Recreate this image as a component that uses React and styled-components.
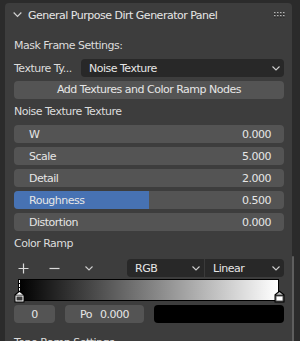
import styled, { createGlobalStyle } from 'styled-components';

const GlobalStyle = createGlobalStyle`
    html, body {
        margin: 0;
        padding: 0;
        background: #2b2b2b;
    }
    body {
        font-family: "DejaVu Sans", "Liberation Sans", sans-serif;
        font-size: 11px;
        letter-spacing: -0.5px;
        color: #e0e0e0;
    }
`;

const Region = styled.div`
    position: relative;
    width: 300px;
    height: 341px;
    padding: 3px 8px 0 5px;
    box-sizing: border-box;
    overflow: hidden;
`;

const Scrollbar = styled.div`
    position: absolute;
    right: 6px;
    top: 256px;
    width: 2px;
    height: 100px;
    border-radius: 1px;
    background: #5e5e5e;
`;

const Panel = styled.section`
    background: #3d3d3d;
    border-radius: 4px 4px 0 0;
    min-height: 360px;
`;

const PanelHeader = styled.header`
    display: flex;
    align-items: center;
    height: 24px;
    padding: 0 7px 0 8px;
    color: #e6e6e6;
    & .title {
        flex: 1;
        margin-left: 6px;
        white-space: nowrap;
    }
`;

const PanelBody = styled.div`
    display: flex;
    flex-direction: column;
    gap: 4px;
    padding: 10px 8px 0 9px;
`;

const Label = styled.div`
    height: 18px;
    line-height: 18px;
    color: #dcdcdc;
    white-space: nowrap;
    margin-top: ${p => p.$top || 0}px;
`;

const PropRow = styled.div`
    display: flex;
    align-items: center;
    height: 18px;
    & .prop-label {
        width: 67px;
        color: #dcdcdc;
        white-space: nowrap;
    }
`;

const Dropdown = styled.div`
    display: flex;
    align-items: center;
    justify-content: space-between;
    flex: ${p => (p.$width ? 'none' : 1)};
    width: ${p => (p.$width ? p.$width + 'px' : 'auto')};
    height: 18px;
    padding: 0 4px 0 8px;
    box-sizing: border-box;
    background: #282828;
    color: #e6e6e6;
    border-radius: ${p => p.$radius || '4px'};
    border-left: ${p => (p.$joined ? '1px solid #3a3a3a' : 'none')};
    white-space: nowrap;
`;

const Button = styled.div`
    height: 18px;
    line-height: 18px;
    text-align: center;
    background: #545454;
    color: #e6e6e6;
    border-radius: 4px;
    white-space: nowrap;
`;

const Slider = styled.div`
    position: relative;
    height: 18px;
    background: #545454;
    border-radius: 4px;
    overflow: hidden;
    & .fill {
        position: absolute;
        left: 0;
        top: 0;
        bottom: 0;
        background: #4772b3;
    }
    & .content {
        position: relative;
        display: flex;
        justify-content: space-between;
        align-items: center;
        height: 100%;
        padding: 0 13px 0 15px;
        color: #e6e6e6;
    }
`;

const Toolbar = styled.div`
    display: flex;
    align-items: center;
    height: 18px;
    margin-top: 2px;
`;

const IconSlot = styled.div`
    display: flex;
    align-items: center;
    justify-content: center;
    width: ${p => p.$w}px;
    height: 18px;
    color: #d8d8d8;
`;

const Spacer = styled.div`
    flex: 1;
`;

const Ramp = styled.div`
    position: relative;
    height: 22px;
    margin: -2px 5px 0 4px;
    & .gradient {
        height: 20px;
        border: 1px solid #000;
        background: linear-gradient(to right, #000, #fff);
    }
    & .dash {
        position: absolute;
        left: 1px;
        top: 1px;
        height: 11px;
        border-left: 1px dashed #fff;
    }
`;

const Marker = styled.svg`
    position: absolute;
    bottom: -2px;
    left: ${p => p.$x}px;
`;

const ValueRow = styled.div`
    display: flex;
    gap: 10px;
    height: 18px;
`;

const Field = styled.div`
    display: flex;
    align-items: center;
    justify-content: center;
    gap: 8px;
    width: ${p => p.$w}px;
    background: #545454;
    color: #e6e6e6;
    border-radius: 4px;
`;

const Swatch = styled.div`
    flex: 1;
    background: #000;
    border-radius: 4px;
`;

function Chevron({ color = '#cfcfcf', size = 8 }) {
    return (
        <svg width={size} height={size / 2 + 1} viewBox="0 0 8 5">
            <polyline points="0.5,0.5 4,4 7.5,0.5" fill="none" stroke={color} strokeWidth="1.1" />
        </svg>
    );
}

function Grip() {
    const dots = [];
    for (let r = 0; r < 2; r++) {
        for (let c = 0; c < 4; c++) {
            dots.push(<rect key={`d${r}${c}`} x={c * 3} y={r * 3} width="1.5" height="1.5" fill="#b5b5b5" />);
            dots.push(<rect key={`s${r}${c}`} x={c * 3} y={r * 3 + 1.5} width="1.5" height="1" fill="#1e1e1e" />);
        }
    }
    return <svg width="11" height="6" viewBox="0 0 11 6">{dots}</svg>;
}

function RampMarker({ x, color, active }) {
    return (
        <Marker $x={x} width="11" height="13" viewBox="0 0 11 13">
            <path d="M5.5 0.5 L10.5 4.5 L10.5 12.5 L0.5 12.5 L0.5 4.5 Z" fill="#000" />
            <path d="M5.5 2 L9 4.8 L2 4.8 Z" fill={active ? '#ffffff' : '#bdbdbd'} />
            <rect x="1.5" y="5.5" width="8" height="6" fill={active ? '#ffffff' : '#5a5a5a'} />
            <rect x="2.5" y="6.5" width="6" height="4" fill={color} />
        </Marker>
    );
}

const sliders = [
    { name: 'W', value: '0.000' },
    { name: 'Scale', value: '5.000' },
    { name: 'Detail', value: '2.000' },
    { name: 'Roughness', value: '0.500', fill: 50 },
    { name: 'Distortion', value: '0.000' },
];

function App() {
    return (
        <Region>
            <GlobalStyle />
            <Panel>
                <PanelHeader>
                    <Chevron size={9} color="#d0d0d0" />
                    <span className="title">General Purpose Dirt Generator Panel</span>
                    <Grip />
                </PanelHeader>
                <PanelBody>
                    <Label>Mask Frame Settings:</Label>
                    <PropRow>
                        <span className="prop-label">Texture Ty...</span>
                        <Dropdown>
                            <span>Noise Texture</span>
                            <Chevron />
                        </Dropdown>
                    </PropRow>
                    <Button>Add Textures and Color Ramp Nodes</Button>
                    <Label>Noise Texture Texture</Label>
                    {sliders.map(s => (
                        <Slider key={s.name}>
                            {s.fill && <div className="fill" style={{ width: `${s.fill}%` }} />}
                            <div className="content">
                                <span>{s.name}</span>
                                <span>{s.value}</span>
                            </div>
                        </Slider>
                    ))}
                    <Label>Color Ramp</Label>
                    <Toolbar>
                        <IconSlot $w={18}>
                            <svg width="11" height="11" viewBox="0 0 11 11">
                                <path d="M5.5 0.5 V10.5 M0.5 5.5 H10.5" stroke="#dadada" strokeWidth="1.2" />
                            </svg>
                        </IconSlot>
                        <IconSlot $w={44}>
                            <svg width="11" height="3" viewBox="0 0 11 3">
                                <path d="M0.5 1.5 H10.5" stroke="#dadada" strokeWidth="1.2" />
                            </svg>
                        </IconSlot>
                        <IconSlot $w={26}>
                            <Chevron />
                        </IconSlot>
                        <Spacer />
                        <Dropdown $width={77} $radius="4px 0 0 4px">
                            <span>RGB</span>
                            <Chevron />
                        </Dropdown>
                        <Dropdown $width={80} $radius="0 4px 4px 0" $joined>
                            <span>Linear</span>
                            <Chevron />
                        </Dropdown>
                    </Toolbar>
                    <Ramp>
                        <div className="gradient" />
                        <div className="dash" />
                        <RampMarker x={-4} color="#3a3a3a" active />
                        <RampMarker x={256} color="#ffffff" />
                    </Ramp>
                    <ValueRow>
                        <Field $w={41}>0</Field>
                        <Field $w={79}>
                            <span>Po</span>
                            <span>0.000</span>
                        </Field>
                        <Swatch />
                    </ValueRow>
                    <Label $top={7}>Tone Ramp Settings</Label>
                </PanelBody>
            </Panel>
            <Scrollbar />
        </Region>
    );
}

export default App;
